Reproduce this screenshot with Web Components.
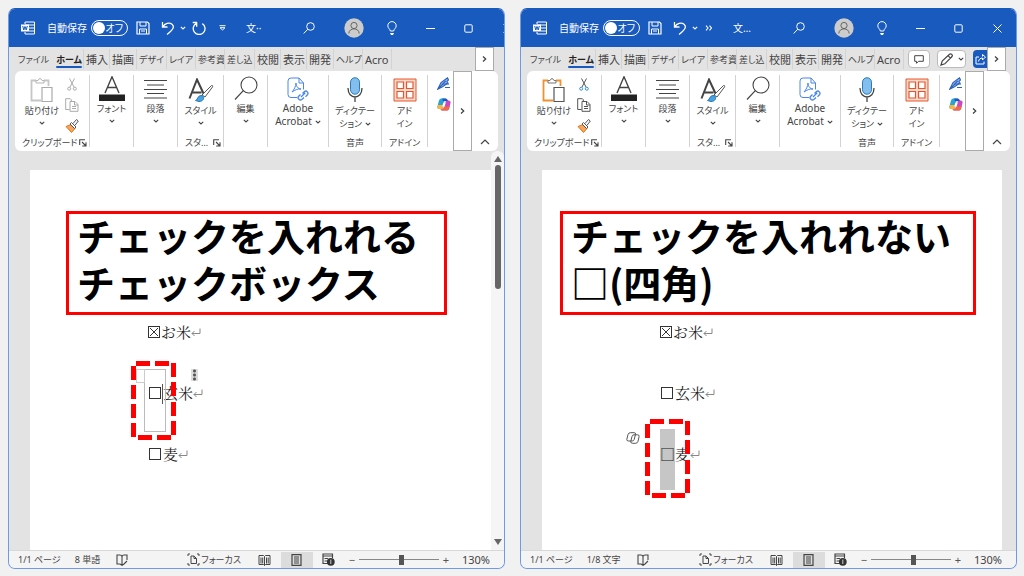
<!DOCTYPE html>
<html lang="ja">
<head>
<meta charset="utf-8">
<title>Word のチェックボックスと四角</title>
<style>
  body {
    margin: 0; box-sizing: border-box; min-height: 100vh; padding: 8px 7px 7px 8px;
    display: grid; grid-template-columns: 1fr 1fr; gap: 15px; background: #f1f1f1; color: #444;
    font-family: "Noto Sans", "Noto Sans CJK JP", sans-serif; font-size: 10px; line-height: 13px;
    font-feature-settings: "palt";
  }
</style>
</head>
<body>
<word-window>
  <title-bar slot="title" narrow></title-bar>
  <tab-strip slot="tabs"></tab-strip>
  <ribbon-bar slot="ribbon" nopaste></ribbon-bar>
  <word-page slot="doc" scroll>
    <callout-box slot="head">チェックを入れれる<br>チェックボックス</callout-box>
    <doc-line box="on">お米</doc-line>
    <doc-line box="off" mark="control">玄米</doc-line>
    <doc-line box="off">麦</doc-line>
  </word-page>
  <status-bar slot="status" count="8 単語"></status-bar>
</word-window>
<word-window>
  <title-bar slot="title"></title-bar>
  <tab-strip slot="tabs" actions></tab-strip>
  <ribbon-bar slot="ribbon"></ribbon-bar>
  <word-page slot="doc">
    <callout-box slot="head" wide>チェックを入れれない<br>□(四角)</callout-box>
    <doc-line box="on">お米</doc-line>
    <doc-line box="off">玄米</doc-line>
    <doc-line box="text" mark="selection">麦</doc-line>
  </word-page>
  <status-bar slot="status" count="1/8 文字"></status-bar>
</word-window>

<script>
const reset = `<style>
  *, *::before { box-sizing: border-box; }
  button { font: inherit; color: inherit; font-feature-settings: inherit; background: none; border: 0; padding: 0; margin: 0;
    display: flex; align-items: center; justify-content: center; white-space: nowrap; }
</style>`;
const define = (name, render) => customElements.define(name, class extends HTMLElement {
  connectedCallback() {
    if (!this.shadowRoot) this.attachShadow({ mode: 'open' }).innerHTML = reset + render(this);
  }
});

/* name: [width, height, markup] */
const icons = {
  word: [14, 14, '<path d="M4 3V1h9.500v12H4v-2M4 4h9M8 7h5M8 10h5"/><path d="M0 3.500h8v7H0z" fill="#fff" stroke="none"/><path d="M1.700 5l1.100 4 1.200-3.600L5.200 9l1.100-4" stroke="#185abd"/>'],
  save: [14, 14, '<path d="M1 1h10.500l1.500 1.500V13H1z" stroke-width="1.200"/><path d="M4 1v4h6V1M3.500 13V8h7v5M5 10h4"/>'],
  undo: [14, 14, '<path d="M1.500 1v5h5M1.700 5.800C4 2.500 8 1 11 3.200c3 2.500 1 5.500-5 10.300" stroke-width="1.300"/>'],
  redo: [14, 14, '<path d="M5 1.500H.700M4.700 1.200v4.500M4.500 2.300a5.900 5.900 0 1 0 5.800.3" stroke-width="1.300"/>'],
  down: [6, 4, '<path d="M.8.8L3 3 5.200.8" stroke-width="1.100"/>'],
  right: [5, 8, '<path d="M1 1.500L3.700 4 1 6.500" stroke-width="1.300"/>'],
  up: [10, 6, '<path d="M1 5l4-4 4 4" stroke-width="1.200"/>'],
  more: [7, 6, '<path d="M.5.700h6M1 2.700h5L3.500 5z"/>'],
  dbl: [8, 6, '<path d="M1 .7L3 3 1 5.300M4.500.7L6.500 3l-2 2.300" stroke-width="1.100"/>'],
  search: [12, 12, '<circle cx="7.500" cy="4.500" r="3.800"/><path d="M4.700 7.300L.7 11.500"/>'],
  user: [20, 20, '<circle cx="10" cy="10" r="9.700" fill="#ccc" stroke="none"/><circle cx="10" cy="7.500" r="3.100" stroke="#666"/><path d="M4.800 15.500c.2-6.200 10.200-6.200 10.400 0" stroke="#666"/>'],
  bulb: [10, 14, '<path d="M3.300 10C3.300 8 .8 7.500.8 4.800a4.200 4.200 0 0 1 8.400 0C9.200 7.500 6.700 8 6.700 10zM3.500 12.500h3L6 13.500H4z"/>'],
  min: [9, 9, '<path d="M0 4.500h9"/>'],
  max: [9, 9, '<rect x=".8" y=".8" width="7.400" height="7.400" rx="1"/>'],
  close: [9, 9, '<path d="M.5.500l8 8M8.500.500l-8 8"/>'],
  comment: [10, 9, '<path d="M.7.700h8.600v5.600H4.500L2.500 8.300v-2H.7z"/>'],
  pencil: [14, 13, '<path d="M1 12l1.200-4L9.500 1.200c1.500-1.200 3.600.8 2.500 2.300L4.800 10.800zM8 2.700l2.500 2.500" stroke-width="1.200"/>'],
  share: [11, 11, '<path d="M4 3H1v7h8V7.500M3.500 7.500C4 5 5.500 4 7.500 4V6l3-3-3-2.500V2.500"/>'],
  paste: [24, 24, '<path d="M6 2.500H1.500v20H11M14 2.500h4.500V8" stroke="var(--o)" stroke-width="1.800"/><path d="M6 5V2.500h2q2-4 4 0h2V5z" stroke="var(--g)"/><path d="M12 9.500h10v14H12z" stroke="var(--d)" fill="#fff" stroke-width="1.200"/>'],
  cut: [12, 13, '<path d="M3.500.500L8 9M8.500.500L4 9" stroke="var(--d)"/><circle cx="3.200" cy="10.700" r="1.500" stroke="var(--b)"/><circle cx="8.800" cy="10.700" r="1.500" stroke="var(--b)"/>'],
  copy: [14, 14, '<path d="M4.500 11.500H.7V.700h4.600l1 1v2" stroke="var(--d)"/><path d="M5 3.500h5l3 3v6.800H5z M9.500 3.500V7H13M7 8.500h4M7 10.500h4" stroke="var(--d)"/>'],
  brush: [14, 14, '<path d="M1 7.500l5-2 4 4-3.500 4z" fill="#f7a55b" stroke="#e8761a"/><path d="M5 5l4.500 4.500L11 8 6.500 3.500zM8 4.500l3.500-4L13.300 2l-3.500 4.500" fill="#fff" stroke="#555"/>'],
  font: [28, 25, '<path d="M7 17L14 .8 21 17M9.500 11.500h9" stroke-width="1.400"/><path d="M1 18.500h26V25H1z" fill="#222" stroke="none"/>'],
  para: [24, 20, '<path d="M0 1.500h23M3 6h17M0 10.500h23M3 14.500h17M0 19h23" stroke-width="1.100"/>'],
  style: [26, 24, '<path d="M1.500 20.500L9 1.500l6.500 14M4 14.500h9.500" stroke-width="2"/><path d="M14 17L23.500 7.500c1.300-.5 1.300.5 1 1.500L17 19z" fill="#fff" stroke="#555"/><path d="M7.500 22.500c2 0 2-5 5.500-5 4 0 3.500 6-2 6z" fill="#4aa3e0" stroke="#1e78bd"/>'],
  find: [24, 25, '<circle cx="15" cy="9" r="8" stroke-width="1.100"/><path d="M9.300 14.700L1 23.500" stroke-width="1.200"/>'],
  pdf: [22, 24, '<path d="M10 20.500H4q-3 0-3-3V4q0-3 3-3h8l4.500 5v6.500M12 1v5h4.500M5 15c2-2 4-6 4-9 0 3 2 6 5 6-3-.5-6 1-9 3z"/><path d="M13.500 17.500l-2 2c-1.500 2 1.500 4.500 3.300 3l2.200-2M15.500 16.500l2-2c2-1.500 4.500 1.500 3 3.200l-2 2M14 20l4.300-4.200" stroke-width="1.300"/>'],
  mic: [16, 25, '<rect x="3.500" y=".7" width="9" height="16.500" rx="4.500" fill="#83beec" stroke="#2a7cc0"/><path d="M1 11c0 12 14 12 14 0M8 20v5" stroke-width="1.300"/>'],
  addin: [24, 24, '<path d="M1 1h22v22H1z" fill="#fbd9cd"/><path d="M4 4h6.500v6.500H4zM13.500 4H20v6.500h-6.500zM4 13.500h6.500V20H4zM13.500 13.500H20V20h-6.500z" fill="#fff" stroke-width="1.200"/>'],
  pen: [14, 13, '<path d="M.700 12.300L4 5.500 10.500.8 11.500 3 10 4.500 11 6 5.500 9.800zM.700 12.300l8-8.500" fill="#8fb2ea" stroke-width="1.100"/><path d="M5.500 7h6.500M8 10.500h5" stroke-width="1.200"/>'],
  copilot: [14, 13, '<g stroke="none"><path d="M4 .500h4.500q1.500 0 2 1.500l.3 1H7.500L6 9.500Q5.500 11 4 11H2Q0 11 .5 8.500L1.800 3Q2.500.500 4 .500z" fill="#27a3d8"/><path d="M.500 7H6.500L6 9.500Q5.500 11 4 11H2Q0 11 .5 7z" fill="#f4b83a"/><path d="M9 2.500h2.500q2.500 0 2 2.500l-1.200 5q-.6 2.500-2.300 2.500H5.500q-1.500 0-2-1.500H5q1.500 0 2-2z" fill="#ca48c4"/><path d="M7.300 8.500h5.500q-.8 4-2.800 4H5.500q-1.500 0-2-1.500H5q1.500 0 2.300-2.500z" fill="#f06c45"/><path d="M5 .500h3.500q1.500 0 2 1.500l.3 1H6z" fill="#2356c5"/><path d="M6.300 4.500h2.400L7.700 8.500H5.300z" fill="#fff"/></g>'],
  launch: [8, 8, '<path d="M.700 6V.700H6M3 3l3.500 3.500M7 3.200V7H3.200" stroke-width="1.100"/>'],
  proof: [12, 12, '<path d="M6 2.500Q5.500 1 4 1H1v9h3l2 1.300V2.500Q6.500 1 8 1h3v5M6 11.300L8 10l3-3" stroke-width="1.100"/>'],
  focus: [13, 13, '<path d="M3 1H1v2M10 1h2v2M3 12H1v-2M10 12h2v-2"/><path d="M4 3h3l2.500 2.500V10.500H4zM7 3v2.500h2.500"/>'],
  read: [13, 12, '<path d="M1 1.500h4.500l1 1 1-1H12v9H7.500l-1 1-1-1H1zM6.500 2.500v9M3 3.500v6M4.700 3.500v6M8.500 3.500v6M10.200 3.500v6"/>'],
  layout: [11, 12, '<path d="M1 .700h9v10.600H1zM3 3h5M3 5h5M3 7h5M3 9h5" stroke-width="1.200"/>'],
  web: [13, 13, '<path d="M6 10.500H1V1h9.500v4M1 3h9.500M2.500 5.500H6M2.500 8H5" stroke-width="1.200"/><circle cx="8.800" cy="8.800" r="3.900" fill="#333" stroke="none"/><path d="M8.800 6.500v4.500" stroke="#ccc"/>'],
  enter: [10, 9, '<path d="M9 .500V5.500H1M3.500 3L1 5.500 3.500 8" stroke="#888"/>'],
  tri: [8, 6, '<path d="M0 6L4 0l4 6z" fill="#666" stroke="none"/>'],
  trid: [8, 6, '<path d="M0 0h8L4 6z" fill="#666" stroke="none"/>'],
  pilot: [14, 12, '<path d="M4.500.700h3.800q1.500 0 1.200 1.500L8.200 7.500Q7.700 9 6.300 9H2.500Q.500 9 .8 7.300l1.300-5Q2.600.700 4.500.700zM9.500 2.800h2q2 0 1.600 1.800L12 9.300q-.6 2-2.400 2H6.500q-1.700 0-1.800-1.600L6 4.500q.5-1.700 2-1.700z" stroke="#555"/>'],
};
define('ui-icon', el => {
  const [w, h, body] = icons[el.getAttribute('name')];
  return `<style>:host { display: block; flex: none; } svg { display: block; }</style>
  <svg width="${w}" height="${h}" viewBox="0 0 ${w} ${h}" fill="none" stroke="currentColor" aria-hidden="true">${body}</svg>`;
});
const icon = n => `<ui-icon name="${n}"></ui-icon>`;

define('word-window', () => `<style>
  :host { display: flex; flex-direction: column; min-width: 0; overflow: hidden; background: #e3e3e3;
    border: 1px solid #6b9be6; border-top-color: #185abd; border-radius: 7px; box-sizing: border-box; }
  .doc { flex: 1; display: flex; }
  .doc slot { display: contents; }
</style>
<slot name="title"></slot><slot name="tabs"></slot><slot name="ribbon"></slot>
<div class="doc"><slot name="doc"></slot></div><slot name="status"></slot>`);

define('title-bar', el => {
  const narrow = el.hasAttribute('narrow');
  return `<style>
  :host { display: flex; align-items: center; height: 38px; flex: none; background: #185abd; color: #fff; padding-left: 12px; overflow: hidden; }
  .label { margin-left: 12px; width: 44px; white-space: nowrap; }
  .switch { width: 37px; height: 16px; border: 1px solid #fff; border-radius: 8px; justify-content: space-between; padding: 0 4px 0 1px; }
  .switch::before { content: ""; width: 12px; height: 12px; border-radius: 6px; background: #fff; }
  .tools { display: flex; align-items: center; margin-left: 8px; }
  .undo { gap: 5px; margin: 0 7px 0 11px; }
  .redo { gap: 13px; display: flex; align-items: center; margin-left: -1px; }
  .name { flex: 1; padding-left: 20px; white-space: nowrap; }
  .right { flex: none; display: grid; grid-template-columns: 46px 44px 31px 46px 31px 46px; justify-items: center; align-items: center; width: 244px; margin-right: -4px; }
  :host([narrow]) .right { margin-right: -26px; }
</style>
${icon('word')}<span class="label" id="a">自動保存</span>
<button class="switch" role="switch" aria-checked="false" aria-labelledby="a">オフ</button>
<div class="tools"><button aria-label="保存">${icon('save')}</button>
<button class="undo" aria-label="元に戻す">${icon('undo')}${icon('down')}</button>
${narrow ? `<div class="redo"><button aria-label="やり直し">${icon('redo')}</button><button aria-label="その他">${icon('more')}</button></div>` : `<button aria-label="その他">${icon('dbl')}</button>`}</div>
<span class="name">${narrow ? '文··' : '文…'}</span>
<div class="right">${['search', 'user', 'bulb', 'min', 'max', 'close'].map(n => `<button aria-label="${n}">${icon(n)}</button>`).join('')}</div>`;
});

define('tab-strip', el => `<style>
  :host { display: flex; align-items: center; height: 24px; flex: none; padding-right: 10px; }
  nav { display: grid; grid-template-columns: 44px 31px 26px 27px 30px 29px 29px 30px 26px 26px 27px 29px 29px; height: 20px; flex: none; }
  nav button { justify-content: flex-start; overflow: hidden; padding-left: 2px; border-right: 1px solid #d3d3d3; font-size: 11px; }
  nav .s { font-size: 9px; }
  nav .file { padding-left: 9px; border: 0; }
  nav .on { display: grid; align-content: center; justify-content: center; font-weight: 700; color: #222; }
  nav .on::after { content: ""; height: 2px; margin-bottom: -2px; background: #185abd; border-radius: 1px; }
  .gap { flex: 1; }
  .act { height: 18px; border: 1px solid #bbb; border-radius: 4px; background: #fff; margin-right: 7px; gap: 4px; }
  .c { width: 22px; } .p { width: 29px; }
  .share { width: 14px; height: 18px; background: #185abd; color: #fff; border-radius: 4px 0 0 4px; overflow: hidden; }
  .next { width: 19px; height: 24px; background: #fff; border: 1px solid #ababab; }
</style>
<nav><button class="file s">ファイル</button><button class="on s">ホーム</button>${
  [['挿入'], ['描画'], ['デザイ', 's'], ['レイア', 's'], ['参考資', 's'], ['差し込', 's'], ['校閲'], ['表示'], ['開発'], ['ヘルプ', 's'], ['Acro']]
  .map(([t, c]) => `<button class="${c || ''}">${t}</button>`).join('')}</nav><span class="gap"></span>
${el.hasAttribute('actions') ? `<button class="act c" aria-label="コメント">${icon('comment')}</button><button class="act p" aria-label="編集">${icon('pencil')}${icon('down')}</button><button class="share" aria-label="共有">${icon('share')}</button>` : ''}
<button class="next" aria-label="次のタブ">${icon('right')}</button>`);

define('ribbon-group', el => `<style>
  :host { display: flex; flex-direction: column; justify-content: space-between; min-width: 0; margin: 4px 0; border-right: 1px solid #d2d2d2; height: 72px; }
  .body { display: flex; justify-content: center; }
  .label { display: flex; align-items: center; justify-content: center; height: 13px; white-space: nowrap; margin-bottom: -2px; }
  :host([launch]) .label { justify-content: space-between; padding: 0 2px 0 7px; }
</style><div class="body"><slot></slot></div>
<div class="label"><span>${el.getAttribute('label') || ''}</span>${el.hasAttribute('launch') ? `<button aria-label="詳細">${icon('launch')}</button>` : ''}</div>`);

define('ribbon-button', el => `<style>
  :host { display: block; }
  button { flex-direction: column; }
  .pic { height: 27px; display: grid; place-items: center; color: var(--ink, #444); }
  :host([low]) .pic { height: 29px; }
  .text { text-align: center; }
  .arrow { height: 12px; display: grid; place-items: center; }
</style><button><span class="pic">${icon(el.getAttribute('icon'))}</span><span class="text"><slot></slot></span>
${el.hasAttribute('menu') ? `<span class="arrow">${icon('down')}</span>` : ''}</button>`);

define('ribbon-bar', () => `<style>
  :host { display: grid; grid-template-columns: 75px 44px 44px 46px 44px 61px 53px 46px 25px 19px 1fr; height: 80px; flex: none; margin: 0 6px; background: #fff; border-radius: 6px; font-size: 9px;
    --o: #f0912d; --g: #777; --d: #555; --b: #2d8fd5; }
  :host([nopaste]) { --o: #c6c6c6; --g: #b5b5b5; --d: #aaa; --b: #aaa; }
  .clip { display: grid; justify-items: center; gap: 7px; margin: 3px 0 0 6px; }
  .pdf { --ink: #4a86e8; font-size: 10px; } .add { --ink: #e4572e; }
  .two { display: flex; align-items: center; justify-content: center; gap: 3px; }
  .mini { display: grid; justify-items: center; align-content: start; gap: 8px; padding: 6px 0 0 6px; color: #2f62bd; }
  .next { background: #fff; border: 1px solid #ababab; }
  .fold { align-items: flex-end; padding-bottom: 6px; }
</style>
<ribbon-group label="クリップボード" launch><ribbon-button icon="paste" low menu>貼り付け</ribbon-button>
<div class="clip"><button aria-label="切り取り">${icon('cut')}</button><button aria-label="コピー">${icon('copy')}</button><button aria-label="書式のコピー">${icon('brush')}</button></div></ribbon-group>
<ribbon-group><ribbon-button icon="font" menu>フォント</ribbon-button></ribbon-group>
<ribbon-group><ribbon-button icon="para" menu>段落</ribbon-button></ribbon-group>
<ribbon-group label="スタ…" launch><ribbon-button icon="style" low menu>スタイル</ribbon-button></ribbon-group>
<ribbon-group><ribbon-button icon="find" menu>編集</ribbon-button></ribbon-group>
<ribbon-group><ribbon-button class="pdf" icon="pdf">Adobe<span class="two">Acrobat ${icon('down')}</span></ribbon-button></ribbon-group>
<ribbon-group label="音声"><ribbon-button icon="mic" low>ディクテー<span class="two">ション ${icon('down')}</span></ribbon-button></ribbon-group>
<ribbon-group label="アドイン"><ribbon-button class="add" icon="addin" low>アド<br>イン</ribbon-button></ribbon-group>
<div class="mini"><button aria-label="エディター">${icon('pen')}</button><button aria-label="Copilot">${icon('copilot')}</button></div>
<button class="next" aria-label="次のグループ">${icon('right')}</button>
<button class="fold" aria-label="リボンを折りたたむ">${icon('up')}</button>`);

define('word-page', el => `<style>
  :host { flex: 1; display: flex; padding-left: 21px; color: #222; }
  .page { flex: 1; margin: 19px 14px 0 0; padding-top: 41px; background: #fff; }
  :host([scroll]) .page { margin-right: 0; }
  .lines { display: grid; gap: 31px; margin: 2px 0 0 118px; justify-items: start; }
  .bar { width: 13px; background: #f5f5f5; border-radius: 6px 6px 0 0; display: flex; flex-direction: column; align-items: center; padding: 5px 0; gap: 3px; }
  .thumb { width: 6px; height: 32%; border-radius: 3px; background: #666; }
  .rest { flex: 1; }
</style><div class="page"><slot name="head"></slot><div class="lines"><slot></slot></div></div>
${el.hasAttribute('scroll') ? `<div class="bar">${icon('tri')}<span class="thumb"></span><span class="rest"></span>${icon('trid')}</div>` : ''}`);

define('callout-box', () => `<style>
  :host { display: grid; align-content: start; box-sizing: border-box; width: 381px; height: 104px; margin: 0 0 0 36px;
    border: 3px solid #f00; padding-left: 8px; background: #fff; color: #000; white-space: nowrap;
    font-family: "Noto Sans CJK JP", sans-serif; font-size: 38px; line-height: 47px; font-weight: 700; font-feature-settings: normal; }
  :host([wide]) { width: 416px; margin-left: 18px; }
  div { margin-top: -3px; }
</style><div><slot></slot></div>`);

define('dash-frame', () => {
  const v = (x, ys) => ys.map(y => `M${x} ${y}h5v14h-5z`).join('');
  const h = (y, xs) => xs.map(x => `M${x} ${y}h14v5h-14z`).join('');
  return `<style>:host { display: block; } svg { display: block; }</style>
  <svg width="46" height="79" viewBox="0 0 46 79" fill="#f00" aria-hidden="true"><path d="${v(0, [5, 24, 43, 62])}${v(40, [2, 21, 41, 60])}${h(0, [5, 24])}${h(74, [7, 26])}"/></svg>`;
});

define('doc-line', el => {
  const box = el.getAttribute('box'), mark = el.getAttribute('mark');
  return `<style>
  :host { display: flex; align-items: center; height: 30px; position: relative; font-family: "Noto Serif CJK JP", "Noto Sans CJK JP", serif; font-size: 15px; line-height: 30px; font-feature-settings: normal; white-space: nowrap; }
  label, .row { display: flex; align-items: center; position: relative; }
  input { appearance: none; width: 12px; height: 12px; margin: 0 2px 0 1px; border: 1px solid #333; flex: none; }
  input:checked { margin: 0 1px 0 0; background: linear-gradient(45deg, transparent 45%, #333 45% 55%, transparent 55%), linear-gradient(-45deg, transparent 45%, #333 45% 55%, transparent 55%); background-size: 8px 8px; background-position: center; background-repeat: no-repeat; }
  .frame { position: absolute; left: -17px; top: -17px; }
  :host([mark=selection]) .frame { left: -15px; top: -20px; }
  .control { position: absolute; left: -4px; top: -9px; width: 22px; height: 63px; border: 1px solid #bbb; }
  .grip { position: absolute; left: -12px; top: -9px; width: 9px; height: 14px; border: 1px solid #ccc; }
  .caret { position: absolute; left: 14px; top: 6px; width: 1px; height: 20px; background: #555; }
  .more { position: absolute; left: 43px; top: -9px; width: 7px; height: 12px; background: radial-gradient(circle, #555 1px, transparent 2px) 0 0 / 7px 4px, #ddd; }
  .sel { position: absolute; left: 0; top: -10px; width: 15px; height: 61px; background: #c6c6c6; }
  .pilot { position: absolute; left: -34px; top: -7px; }
</style>
${mark === 'selection' ? '<span class="sel"></span>' : ''}
${box === 'text' ? '<span class="row">□<slot></slot></span>' : `<label><input type="checkbox"${box === 'on' ? ' checked' : ''}><span><slot></slot></span></label>`}
${icon('enter')}
${mark === 'control' ? '<span class="control"></span><span class="grip"></span><span class="caret"></span><span class="more"></span>' : ''}
${mark === 'selection' ? `<span class="pilot">${icon('pilot')}</span>` : ''}
${mark ? '<dash-frame class="frame"></dash-frame>' : ''}`;
});

define('status-bar', el => `<style>
  :host { display: flex; align-items: center; height: 17px; flex: none; background: #f4f4f4; border-top: 1px solid #d8d8d8; padding: 0 14px 0 9px; white-space: nowrap; font-size: 9px; }
  .count { margin: 0 16px 0 14px; }
  .gap { flex: 1; }
  .focus { gap: 1px; margin-right: 8px; }
  .view { width: 32px; height: 16px; }
  .on { background: #dcdcdc; }
  .sign { width: 8px; font-size: 11px; margin: 0 3px; color: #555; }
  .zoom { margin-right: 9px; display: flex; align-items: center; }
  input { appearance: none; width: 80px; height: 10px; margin: 0; background: linear-gradient(#888, #888) center / 100% 1px no-repeat; }
  input::-webkit-slider-thumb { appearance: none; width: 5px; height: 10px; background: #555; }
  .pct { font-size: 11px; }
</style>
<span>1/1 ページ</span><span class="count">${el.getAttribute('count')}</span><button aria-label="校正">${icon('proof')}</button><span class="gap"></span>
<button class="focus">${icon('focus')}フォーカス</button>
<button class="view" aria-label="閲覧モード">${icon('read')}</button><button class="view on" aria-label="印刷レイアウト">${icon('layout')}</button><button class="view" aria-label="Web レイアウト">${icon('web')}</button>
<span class="zoom"><button class="sign">−</button><input type="range" min="0" max="100" value="54" aria-label="ズーム"><button class="sign">+</button></span><span class="pct">130%</span>`);
</script>
</body>
</html>
